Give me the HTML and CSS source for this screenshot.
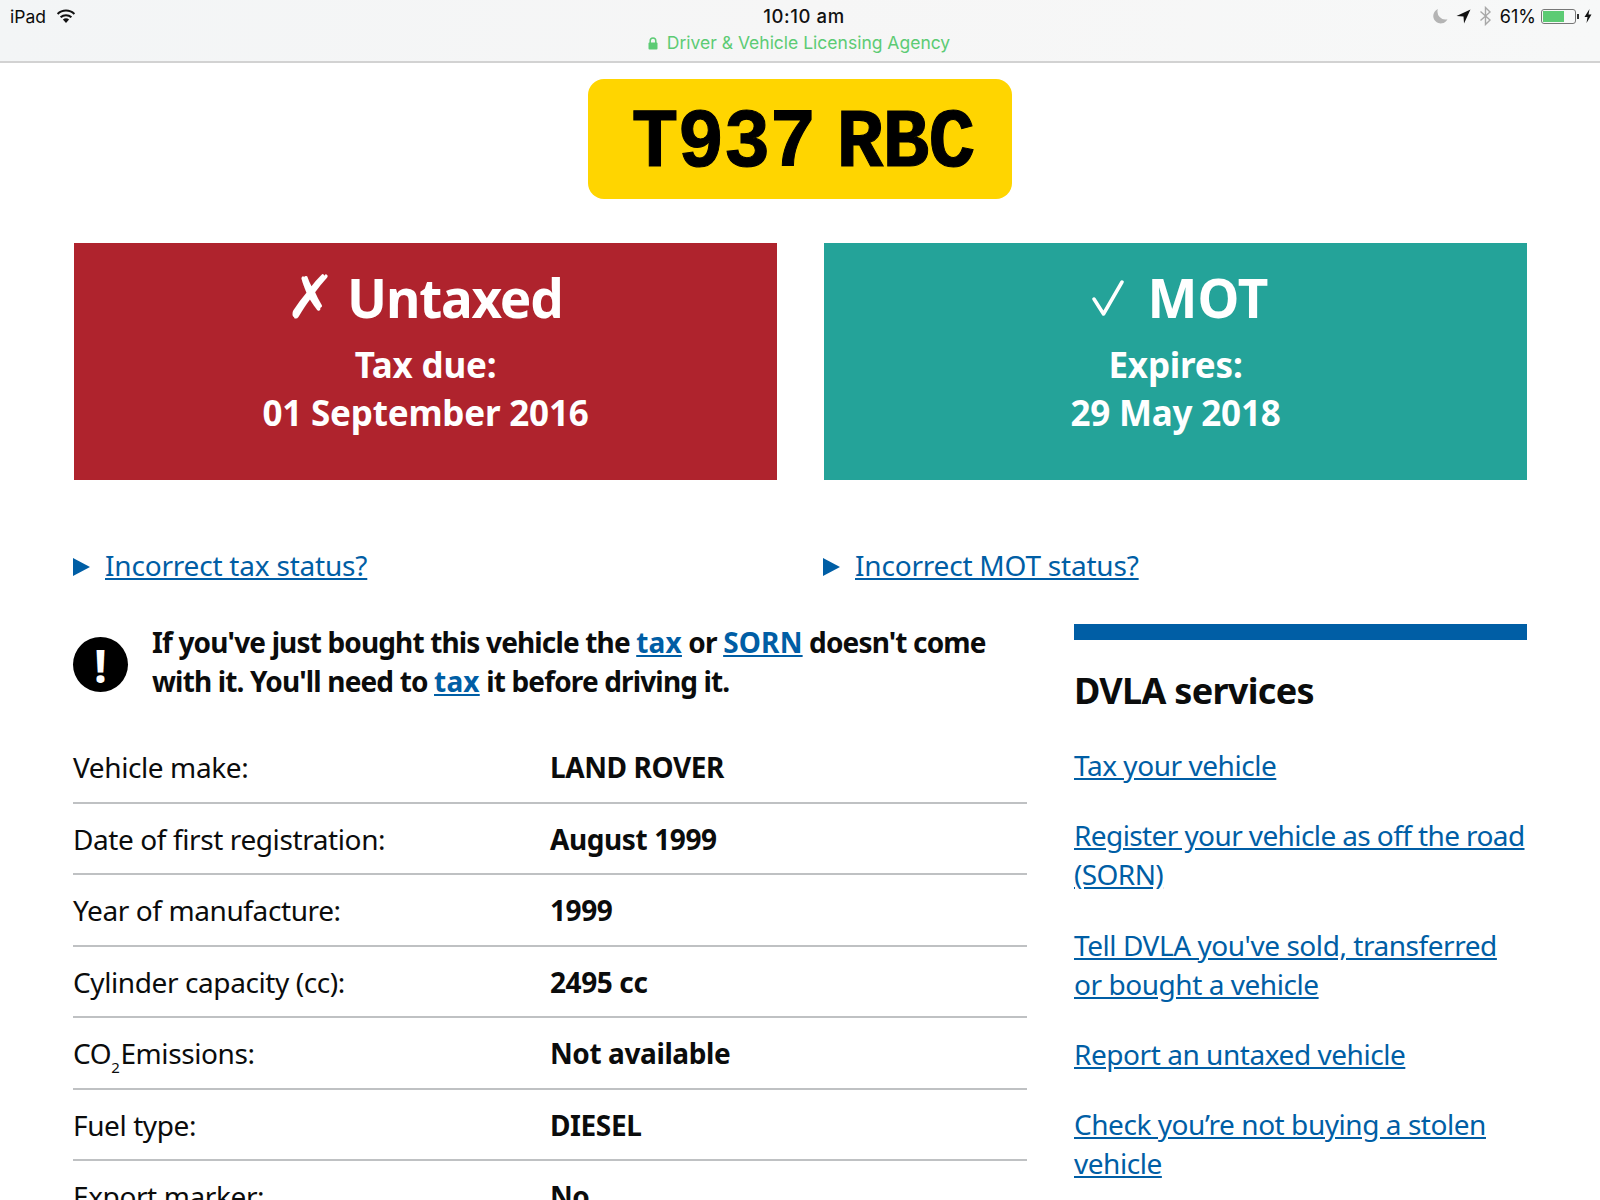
FILE: index.html
```html
<!DOCTYPE html>
<html lang="en">
<head>
  <meta charset="UTF-8">
  <title>Vehicle enquiry</title>
  <link rel="stylesheet" href="styles.css">
</head>
<body>
  <header class="statusbar">
    <div class="status-left">
      <span>iPad</span>
      <svg class="wifi" width="20" height="15" viewBox="0 0 20 15">
        <path d="M10 14 L6.9 10.6 A4.6 4.6 0 0 1 13.1 10.6 Z" fill="#111"/>
        <path d="M4.6 8.3 A7.8 7.8 0 0 1 15.4 8.3" fill="none" stroke="#111" stroke-width="2"/>
        <path d="M1.6 5 A12 12 0 0 1 18.4 5" fill="none" stroke="#111" stroke-width="2"/>
      </svg>
    </div>
    <div class="status-center">
      <div class="clock">10:10 am</div>
      <div class="site">
        <svg width="10" height="13" viewBox="0 0 10 13">
          <path d="M2.2 6 V3.8 A2.8 2.8 0 0 1 7.8 3.8 V6" fill="none" stroke="#5ccb74" stroke-width="1.5"/>
          <rect x="0.5" y="5.5" width="9" height="7" rx="1" fill="#5ccb74"/>
        </svg>
        <span>Driver &amp; Vehicle Licensing Agency</span>
      </div>
    </div>
    <div class="status-right">
      <svg class="icon-gap" width="16" height="16" viewBox="0 0 15 15">
        <path d="M5.5 1 A7 7 0 1 0 14.5 10.5 A7.5 7.5 0 0 1 5.5 1 Z" fill="#b4b4b4"/>
      </svg>
      <svg class="icon-gap" width="15" height="15" viewBox="0 0 14 14">
        <path d="M13.5 0.5 L0.5 6.5 L7 7 L7.5 13.5 Z" fill="#111"/>
      </svg>
      <svg class="icon-gap" width="13" height="20" viewBox="0 0 13 20">
        <path d="M1.5 5.5 L11 14 L6.5 18.5 V1.5 L11 6 L1.5 14.5" fill="none" stroke="#a8a8a8" stroke-width="1.4"/>
      </svg>
      <span class="battery-pct">61%</span>
      <div class="battery"><div class="battery-fill"></div></div>
      <svg width="8" height="14" viewBox="0 0 8 14">
        <path d="M5.5 0 L0.5 8 H3.5 L2.5 14 L7.5 5.5 H4.5 Z" fill="#111"/>
      </svg>
    </div>
  </header>

  <main class="page">
    <div class="plate-wrap">
      <div class="plate"><span class="plate-text">T937 RBC</span></div>
    </div>

    <div class="status-boxes">
      <div class="status-box red">
        <h2><span class="mark">✗</span> Untaxed</h2>
        <p>Tax due:</p>
        <p>01 September 2016</p>
      </div>
      <div class="status-box teal">
        <h2>
          <svg class="check" width="32" height="38" viewBox="0 0 32 38">
            <path d="M2 19 L11.5 34 L30 2" fill="none" stroke="#fff" stroke-width="3.5" stroke-linecap="round" stroke-linejoin="round"/>
          </svg>
          MOT
        </h2>
        <p>Expires:</p>
        <p>29 May 2018</p>
      </div>
    </div>

    <div class="details-row">
      <div class="detail"><span class="arrow"></span><a href="#">Incorrect tax status?</a></div>
      <div class="detail"><span class="arrow"></span><a href="#">Incorrect MOT status?</a></div>
    </div>

    <div class="columns">
      <div class="col-main">
        <div class="notice">
          <div class="notice-icon">!</div>
          <p>If you've just bought this vehicle the <a href="#">tax</a> or <a href="#">SORN</a> doesn't come with it. You'll need to <a href="#">tax</a> it before driving it.</p>
        </div>
        <ul class="facts">
          <li><span>Vehicle make:</span><strong>LAND ROVER</strong></li>
          <li><span>Date of first registration:</span><strong>August 1999</strong></li>
          <li><span>Year of manufacture:</span><strong>1999</strong></li>
          <li><span>Cylinder capacity (cc):</span><strong>2495 cc</strong></li>
          <li><span>CO<sub>2</sub>Emissions:</span><strong>Not available</strong></li>
          <li><span>Fuel type:</span><strong>DIESEL</strong></li>
          <li><span>Export marker:</span><strong>No</strong></li>
        </ul>
      </div>
      <aside class="sidebar">
        <h2>DVLA services</h2>
        <ul>
          <li><a href="#">Tax your vehicle</a></li>
          <li class="tight"><a href="#">Register your vehicle as off the road<br>(SORN)</a></li>
          <li><a href="#">Tell DVLA you've sold, transferred<br>or bought a vehicle</a></li>
          <li><a href="#">Report an untaxed vehicle</a></li>
          <li><a href="#">Check you’re not buying a stolen<br>vehicle</a></li>
        </ul>
      </aside>
    </div>
  </main>
</body>
</html>
```

FILE: styles.css
```css
html, body {
  height: 1200px;
  overflow: hidden;
}
body {
  margin: 0;
  background: #fff;
  color: #0b0c0c;
  font-family: "Noto Sans", Arial, sans-serif;
}
a {
  color: #005ea5;
}
ul {
  list-style: none;
  margin: 0;
  padding: 0;
}

.statusbar {
  height: 61px;
  display: grid;
  grid-template-columns: 1fr auto 1fr;
  background: linear-gradient(100deg, #f3f5f6 0%, #f6f6f6 50%, #f7f8f8 100%);
  border-bottom: 2px solid #d2d2d2;
  font-family: Inter, sans-serif;
  font-size: 17.5px;
}
.status-left {
  display: flex;
  align-items: center;
  align-self: start;
  gap: 10px;
  height: 32px;
  padding-left: 10px;
}
.status-center {
  text-align: center;
  padding-left: 8px;
}
.clock {
  font-weight: 500;
  font-size: 18.5px;
  letter-spacing: 0.6px;
  line-height: 32px;
  color: #111;
}
.site {
  display: flex;
  align-items: center;
  gap: 9px;
  color: #5ccb74;
  line-height: 22px;
  padding-right: 10px;
}
.status-right {
  display: flex;
  align-items: center;
  justify-content: flex-end;
  align-self: start;
  gap: 5px;
  height: 32px;
  padding-right: 8px;
}
.icon-gap {
  margin-right: 3px;
}
.battery-pct {
  font-size: 18px;
}
.battery {
  position: relative;
  width: 35px;
  height: 15px;
  box-sizing: border-box;
  border: 1px solid #777;
  border-radius: 3px;
  padding: 1px;
  margin-right: 3px;
}
.battery::after {
  content: "";
  position: absolute;
  right: -4px;
  top: 4px;
  width: 2px;
  height: 5px;
  background: #333;
}
.battery-fill {
  width: 68%;
  height: 100%;
  background: #5ccb74;
}

.page {
  padding: 0 73px;
}
.plate-wrap {
  display: flex;
  justify-content: center;
  padding-top: 16px;
}
.plate {
  width: 424px;
  height: 120px;
  box-sizing: border-box;
  padding: 7px 0 0 6px;
  border-radius: 16px;
  background: #ffd500;
  color: #000;
  display: flex;
  align-items: center;
  justify-content: center;
}
.plate-text {
  font-family: "Liberation Mono", monospace;
  font-weight: 700;
  font-size: 78px;
  letter-spacing: -0.8px;
  word-spacing: -25px;
  transform: scaleY(1.08);
  -webkit-text-stroke: 1px #000;
}

.status-boxes {
  display: grid;
  grid-template-columns: 703px 703px;
  gap: 47px;
  margin: 44px 0 0 1px;
}
.status-box {
  height: 237px;
  box-sizing: border-box;
  padding-top: 23px;
  text-align: center;
  color: #fff;
}
.status-box h2 {
  margin: 0 0 11px;
  font-size: 53px;
  line-height: 64px;
  font-weight: 700;
}
.status-box p {
  margin: 0;
  font-size: 35px;
  line-height: 48px;
  font-weight: 700;
  letter-spacing: -0.2px;
}
.red h2 {
  letter-spacing: -1.2px;
  padding-right: 3px;
}
.teal h2 {
  padding-left: 9px;
}
.mark {
  font-family: "DejaVu Sans", sans-serif;
  font-weight: 400;
  font-size: 60px;
  line-height: 1;
}
.check {
  margin-right: 10px;
}
.red {
  background: #af232d;
}
.teal {
  background: #24a399;
}

.details-row {
  display: grid;
  grid-template-columns: 703px 703px;
  gap: 47px;
  margin-top: 65px;
  font-size: 28px;
  line-height: 40px;
  letter-spacing: -0.2px;
}
.detail {
  display: flex;
  align-items: center;
  gap: 15px;
}
.arrow {
  width: 0;
  height: 0;
  margin-top: 3px;
  border-left: 17px solid #005ea5;
  border-top: 9.5px solid transparent;
  border-bottom: 9.5px solid transparent;
}

.columns {
  display: grid;
  grid-template-columns: 954px 453px;
  gap: 47px;
  margin-top: 22px;
}
.notice {
  display: flex;
  align-items: flex-start;
  gap: 24px;
  padding-top: 16px;
  height: 125px;
  box-sizing: border-box;
}
.notice-icon {
  width: 55px;
  height: 55px;
  flex: none;
  margin-top: 14px;
  border-radius: 50%;
  background: #000;
  color: #fff;
  display: flex;
  align-items: center;
  justify-content: center;
  font-size: 46px;
  font-weight: 700;
}
.notice p {
  margin: 0;
  font-size: 28px;
  line-height: 39px;
  font-weight: 700;
  letter-spacing: -0.85px;
  width: 860px;
}
.notice a {
  letter-spacing: 0.2px;
}
.facts li {
  display: grid;
  grid-template-columns: 477px 1fr;
  height: 71.5px;
  box-sizing: border-box;
  padding-top: 16px;
  font-size: 28px;
  line-height: 38px;
  letter-spacing: -0.4px;
  border-bottom: 2px solid #bfc1c3;
}
.facts sub {
  font-size: 15px;
  line-height: 0;
  vertical-align: -9px;
  padding-right: 1px;
}
.sidebar {
  border-top: 16px solid #005ea5;
  margin-top: 17px;
}
.sidebar h2 {
  margin: 29px 0 33px;
  font-size: 36px;
  line-height: 44px;
  font-weight: 700;
  letter-spacing: -0.7px;
}
.sidebar li {
  font-size: 28px;
  line-height: 39px;
  letter-spacing: -0.45px;
  margin-bottom: 31.3px;
  white-space: nowrap;
}
.sidebar .tight {
  letter-spacing: -0.6px;
}
```
